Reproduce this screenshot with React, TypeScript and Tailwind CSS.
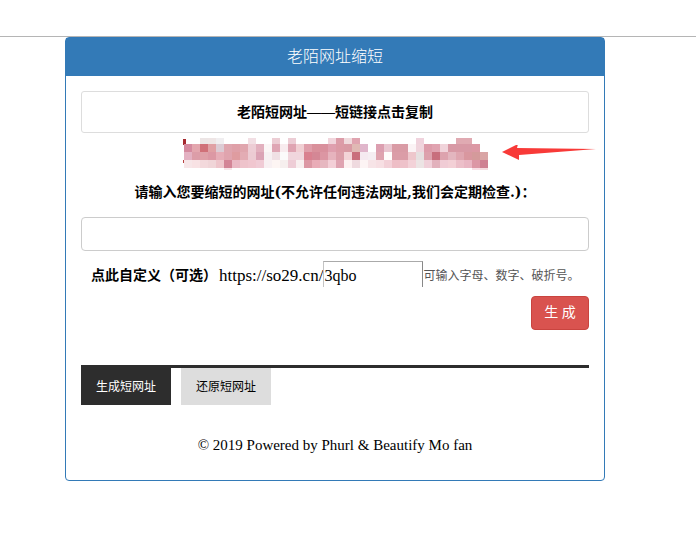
import { useState } from "react";

const TABS = ["生成短网址", "还原短网址"];

// Blurred-out short link, one colour per 8px block ("." = empty)
const MOSAIC = [
  ". . ece5e5 eee5e5 f0eef0 . . . f2dfe4 . . eccdd4 . eccdd5 . . . . f1d5dc dc9ca8 f0dadd e0a4b0 . . . . . . . f0d3dd . . . . e0aab2 e0aab2 . .",
  "d48a9f e3a6ae d07078 e0a0a4 dccbd4 dfa5ae dfa0a8 e0a6ae edcdd5 e2b0be fbf6f6 dfa6b4 f8ebee dfa4b2 f0cfd3 df9eaa d9909b d9909d df9fae dc9aa5 d99aa4 e0b9b4 e0b6cb . dc9fb0 eac7d1 d99ba5 d99ba5 fbf3f5 f0d5dd dd9caa e0a3b0 f0d3da d899a5 d899a5 d899a5 dc98a4",
  "e3b1c2 dc9da8 dfa0a8 dc98a4 e6adb7 e0a4ae df9ca0 e3acb4 eccbd3 dba3b5 f7f0f2 f0e0e4 fbfafa f0d6dd f0d6dd d9808f d48795 dc96a3 e6b3bd dc9ea9 f3d3d7 c96f7c f5eaf0 f5eef2 dfa4af fffdfb db9da7 db9da7 eec7cc e6e0e0 dda1ac c86f7d dda3ae e3b6bf dfa6b0 d9979f d49a9b d9a5a5",
  "f7e6e8 f8e2e4 f3d9dc f0d5d8 eec5cb d38496 eab8c4 eec3cb f0c6cf f0cbd5 f8f0f2 fdf5f3 f6efee eecdd6 f8efef dc98a4 e9acb7 e6b7c0 f3cfd7 dfa3b1 fdf1f1 efdadf fdf4f4 f7e4e7 f7dfe3 f3d1d8 eebec6 eec2ca f3d2d8 ece4e4 f0d0d9 e2b1bc f0ccd5 f3d0d6 ecbfc9 e9b6c3 dc97a5 cf8092",
  ". . . . . f7e5e9 . . . . . . . . . . . . . . . . . . . . . . . . . . . . . . f8e0e6 f5dadf",
].map(row => row.split(" "));

// the first row is 6px tall, the rest follow the 8px grid
const ROW_Y = [0, 6, 14, 22, 30];
const ROW_H = [6, 8, 8, 8, 2];

function MosaicLink() {
  return (
    <svg width="308" height="32" viewBox="-3 0 308 32" shapeRendering="crispEdges" aria-hidden="true">
      <rect x="-1" y="1" width="3" height="6" fill="#a52a2f" />
      <rect x="-1" y="22" width="2" height="3" fill="#b84242" />
      {MOSAIC.map((row, r) =>
        row.map((color, c) =>
          color === "." ? null : (
            <rect key={`${r}-${c}`} x={c * 8} y={ROW_Y[r]} width="8" height={ROW_H[r]} fill={`#${color}`} />
          )
        )
      )}
    </svg>
  );
}

function Arrow() {
  return (
    <svg width="94" height="18" viewBox="0 0 94 18" aria-hidden="true">
      <path d="M0 7 L16 -1 L15 3 L94 4 L17 10 L17 15 Z" fill="#f83a38" />
    </svg>
  );
}

export default function App() {
  const [url, setUrl] = useState("");
  const [alias, setAlias] = useState("3qbo");
  const [activeTab, setActiveTab] = useState(TABS[0]);

  return (
    <div className="bg-white text-black font-['Georgia','Liberation_Serif','Noto_Sans_CJK_SC',serif]">
      <div className="h-[37px] border-b border-[#b5b5b5]" />

      <main className="ml-[65px] mr-[91px] border border-[#337ab7] rounded">
        {/* Heading */}
        <h1 className="bg-[#337ab7] text-white text-base font-light text-center leading-[18px] py-[10px]">
          老陌网址缩短
        </h1>

        <div className="p-[15px]">
          <div className="border border-[#dddddd] rounded-[3px] pt-[11px] pb-[9px] text-sm leading-5 font-bold text-center">
            老陌短网址——短链接点击复制
          </div>

          {/* Generated link */}
          <div className="flex items-center justify-end pt-[5px] -mr-[7px]">
            <MosaicLink />
            <span className="ml-[13px]">
              <Arrow />
            </span>
          </div>

          <form onSubmit={e => e.preventDefault()}>
            <label htmlFor="url" className="block pt-3 text-sm leading-5 font-bold text-center font-['DejaVu_Serif','Noto_Sans_CJK_SC',serif]">
              请输入您要缩短的网址(不允许任何违法网址,我们会定期检查.)：
            </label>
            <input
              id="url"
              type="text"
              value={url}
              onChange={e => setUrl(e.target.value)}
              className="block w-full h-[34px] mt-[15px] px-3 border border-[#cccccc] rounded text-sm outline-none"
            />

            {/* Custom alias */}
            <div className="flex items-center mt-[10px] pl-[10px] h-[26px] whitespace-nowrap">
              <label htmlFor="alias" className="pt-1 mr-0.5 text-sm font-bold">点此自定义（可选）</label>
              <span className="pt-1 text-[17px] leading-5">https://so29.cn/</span>
              <input
                id="alias"
                type="text"
                value={alias}
                onChange={e => setAlias(e.target.value)}
                className="w-[100px] h-[26px] pt-0.5 border border-b-0 border-t-[#aaaaaa] border-l-[#c4c4c4] border-r-[#888888] text-base leading-5 outline-none"
              />
              <span className="pt-1 text-xs text-[#555555]">可输入字母、数字、破折号。</span>
            </div>

            <div className="flex justify-end mt-[9px]">
              <button
                type="submit"
                className="w-[58px] h-[34px] rounded border border-[#c9443f] bg-[#d9534f] text-white text-sm"
              >
                生 成
              </button>
            </div>
          </form>

          {/* Tabs */}
          <nav className="flex gap-[10px] mt-[35px] border-t-[3px] border-[#2d2d2d]">
            {TABS.map(tab => (
              <button
                key={tab}
                type="button"
                onClick={() => setActiveTab(tab)}
                className={`h-[37px] px-[15px] text-xs ${
                  activeTab === tab ? "bg-[#2d2d2d] text-white" : "bg-[#dddddd] text-black"
                }`}
              >
                {tab}
              </button>
            ))}
          </nav>

          <footer className="pt-[30px] pb-[10px] text-[15px] leading-5 text-center">
            © 2019 Powered by Phurl &amp; Beautify Mo fan
          </footer>
        </div>
      </main>
    </div>
  );
}
